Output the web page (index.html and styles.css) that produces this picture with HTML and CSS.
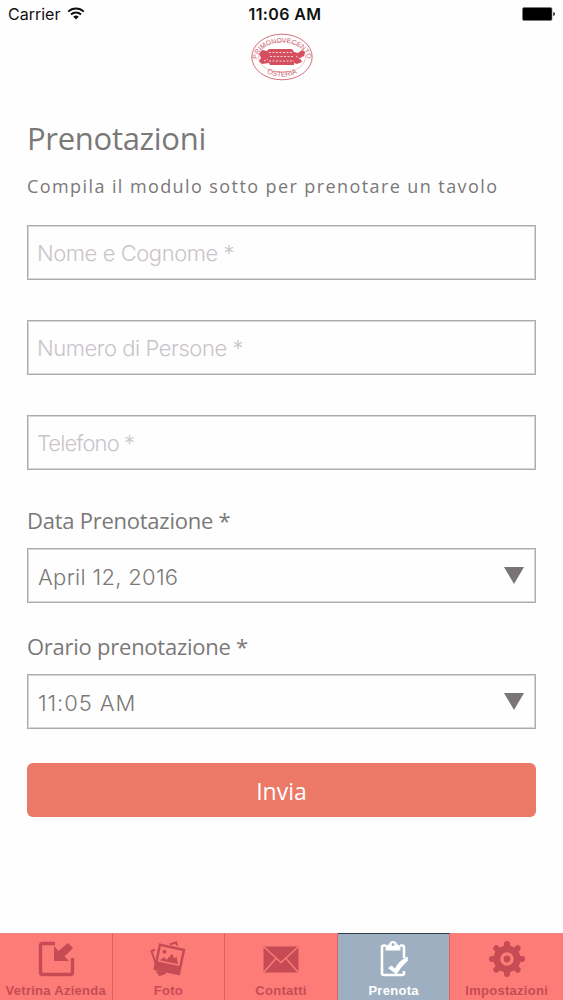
FILE: index.html
```html
<!DOCTYPE html>
<html lang="it">
<head>
  <meta charset="UTF-8">
  <title>Prenotazioni</title>
  <link rel="stylesheet" href="styles.css">
</head>
<body>
  <div class="status-bar">
    <div class="carrier">
      <span>Carrier</span>
      <svg class="wifi" width="18" height="13" viewBox="0 0 18 13">
        <path d="M1.2 4.6a11.2 11.2 0 0 1 15.6 0M4 7.5a7.2 7.2 0 0 1 10 0" fill="none" stroke="#111" stroke-width="2"/>
        <path d="M9 12.6 6.2 9.8a4 4 0 0 1 5.6 0z" fill="#111"/>
      </svg>
    </div>
    <div class="clock">11:06 AM</div>
    <svg class="battery" width="34" height="14" viewBox="0 0 34 14">
      <rect x="0.5" y="0.5" width="29.5" height="13" rx="1.5" fill="#000" stroke="#777" stroke-width="0.6"/>
      <path d="M31.3 5v4q1.7-.5 1.7-2t-1.7-2z" fill="#111"/>
    </svg>
  </div>

  <header class="brand">
    <svg width="62" height="48" viewBox="0 0 62 48">
      <defs>
        <path id="arc-top" d="M6.500 30A25 17 0 1 1 55.500 30"/>
        <path id="arc-bottom" d="M10 36.500Q31 51 52 36.500"/>
      </defs>
      <g fill="none" stroke="#d5707b">
        <ellipse cx="31" cy="24" rx="30.2" ry="22.8" stroke-width="1"/>
        <ellipse cx="31" cy="24" rx="23.5" ry="15.5" stroke-width="0.4"/>
      </g>
      <g class="brand-text" text-anchor="middle">
        <text><textPath href="#arc-top" startOffset="50%">PRIMONOVECENTO</textPath></text>
        <text class="osteria"><textPath href="#arc-bottom" startOffset="50%">OSTERIA</textPath></text>
      </g>
      <!-- the inn: roof, windows, trees -->
      <path d="M8 21l3-4 5 1 2-2h23l2 3 4 1 4-3 3 2-1 4-4 2 2 4-5 2-3-1v2H19l-1-2-7 1-3-3 2-3z" fill="#d64f5f"/>
      <path d="M18 19.500h23M19 23.500h24M18 28h25M13 28l4-2M45 23l4 3" fill="none" stroke="#f8d5d8" stroke-width="1" stroke-dasharray="2 1.500"/>
    </svg>
  </header>

  <main class="booking">
    <h1>Prenotazioni</h1>
    <p class="intro">Compila il modulo sotto per prenotare un tavolo</p>
    <form>
      <input class="field" type="text" placeholder="Nome e Cognome *">
      <input class="field persons" type="text" placeholder="Numero di Persone *">
      <input class="field phone" type="text" placeholder="Telefono *">

      <div class="label">Data Prenotazione *</div>
      <div class="field picker">
        <span class="date">April 12, 2016</span>
        <span class="arrow"></span>
      </div>

      <div class="label">Orario prenotazione *</div>
      <div class="field picker">
        <span class="time">11:05 AM</span>
        <span class="arrow"></span>
      </div>

      <button type="button" class="submit">Invia</button>
    </form>
  </main>

  <nav class="tabs">
    <a class="tab">
      <svg width="38" height="38" viewBox="0 0 38 38">
        <path d="M18 3.500H5.500q-2 0-2 2v27q0 2 2 2h28q2 0 2-2V18" fill="none" stroke="currentColor" stroke-width="3.400"/>
        <path d="M17 6v15h15l-4.500-4.500L36 8 31 3l-9.500 8z" fill="currentColor"/>
      </svg>
      <span>Vetrina Azienda</span>
    </a>
    <a class="tab">
      <svg width="38" height="38" viewBox="0 0 38 38">
        <path d="M6 9.500 2.500 11l6 18M21 4.500l6-2.200 1.300 3.200M8.500 32l2 3 6-2z" fill="none" stroke="currentColor" stroke-width="2"/>
        <g transform="rotate(12 21 19)">
          <path fill-rule="evenodd" d="M7 6h27v27H7zM9.500 8.500v15.500h22v-15.500z" fill="currentColor"/>
          <circle cx="14" cy="13" r="2" fill="currentColor"/>
          <path d="M11 22.500l4-4 3 2 4-7 3 4 2-2 3 7z" fill="currentColor"/>
        </g>
      </svg>
      <span>Foto</span>
    </a>
    <a class="tab">
      <svg width="38" height="38" viewBox="0 0 38 38">
        <path d="M1.500 6.500h35v26h-35z" fill="currentColor"/>
        <path d="M1.500 6.500 19 22.500l17.500-16M1.500 32.500 14 18.500M36.500 32.500 24 18.500" fill="none" stroke="#fa7d78" stroke-width="1.400"/>
      </svg>
      <span>Contatti</span>
    </a>
    <a class="tab active">
      <svg width="38" height="38" viewBox="0 0 38 38">
        <path d="M11 5.500H9q-2 0-2 2V33q0 2 2 2h18q2 0 2-2v-2M25 5.500h2q2 0 2 2V18" fill="none" stroke="currentColor" stroke-width="2.600"/>
        <path fill-rule="evenodd" d="M10.500 10.500V7q0-2 3.500-2.500Q14.500 1 18 1t4 3.500q3.500.5 3.500 2.500v3.500zM18 3a1.500 1.500 0 1 0 0 3 1.500 1.500 0 0 0 0-3z" fill="currentColor"/>
        <path d="M13 28l3.500-2.500 3.500 3q4-8 12.500-12l.5 4q-7 6-11.500 14z" fill="currentColor"/>
      </svg>
      <span>Prenota</span>
    </a>
    <a class="tab">
      <svg width="38" height="38" viewBox="-19 -19 38 38">
        <g fill="none" stroke="currentColor">
          <circle r="10.200" stroke-width="6.800"/>
          <path d="M0-12v-3M0 12v3M-12 0h-3M12 0h3M-8.500-8.500l-2.200-2.200M8.500 8.500l2.200 2.200M-8.500 8.500l-2.200 2.200M8.500-8.500l2.200-2.200" stroke-width="6" stroke-linecap="round"/>
        </g>
        <circle r="3.400" fill="currentColor"/>
      </svg>
      <span>Impostazioni</span>
    </a>
  </nav>
</body>
</html>
```
FILE: styles.css
```css
* {
  box-sizing: border-box;
}
html, body {
  height: 100%;
  margin: 0;
}
body {
  display: flex;
  flex-direction: column;
  background: #fefefe;
  color: #7b7878;
  font-family: "Open Sans", sans-serif;
  overflow: hidden;
}
.status-bar {
  display: grid;
  grid-template-columns: 1fr auto 1fr;
  align-items: center;
  height: 28px;
  padding: 0 7px 0 8px;
  color: #111;
  font: 16px Inter, sans-serif;
}
.carrier {
  display: flex;
  align-items: center;
  gap: 7px;
}
.wifi {
  margin-top: -2px;
}
.clock {
  padding-left: 6px;
  font-weight: 600;
  letter-spacing: 0.4px;
}
.battery {
  justify-self: end;
}
.brand {
  display: flex;
  justify-content: center;
  height: 53px;
  padding-top: 5px;
}
.brand-text {
  fill: #cf6470;
  font: 6.8px "Liberation Sans", sans-serif;
}
.osteria {
  font-size: 7.2px;
}
.booking {
  flex: 1;
  padding: 35px 27px 0;
}
h1 {
  margin: 0;
  font-size: 31px;
  font-weight: 400;
  letter-spacing: -0.3px;
  line-height: 44px;
}
.intro {
  margin: 13px 0 26px;
  font-size: 18px;
  font-weight: 500;
  letter-spacing: 1.41px;
  line-height: 26px;
  white-space: nowrap;
}
.field {
  display: block;
  width: 100%;
  height: 55px;
  margin: 0;
  padding: 0 10px 0 9px;
  border: 1px solid #aeaaad;
  border-radius: 0;
  box-shadow: inset 0 0 0 1px #d9d6d8;
  background: #fefefe;
  color: #7b7878;
  font: 300 22px Inter, sans-serif;
  letter-spacing: -0.45px;
  outline: none;
}
.field::placeholder {
  color: #c9c4ca;
  opacity: 1;
}
.persons, .phone {
  margin-top: 40px;
}
.phone {
  letter-spacing: -0.9px;
}
.label {
  margin: 34px 0 11px;
  font-size: 22px;
  letter-spacing: -0.25px;
  line-height: 33px;
}
.picker + .label {
  margin-top: 27px;
}
.picker {
  display: flex;
  align-items: center;
  justify-content: space-between;
  padding: 2px 11px 0 10px;
}
.date {
  letter-spacing: 0.3px;
}
.time {
  letter-spacing: 0.9px;
}
.arrow {
  margin-top: -2px;
  border: 10px solid transparent;
  border-top: 17px solid #797576;
  border-bottom: 0;
}
.submit {
  display: block;
  width: 100%;
  height: 54px;
  margin-top: 34px;
  padding: 2px 0 0;
  border: 0;
  border-radius: 6px;
  background: #ec7868;
  color: #fff;
  font: 23px "Open Sans", sans-serif;
}
.tabs {
  display: grid;
  grid-template-columns: repeat(5, 1fr);
  height: 67px;
}
.tab {
  display: flex;
  flex-direction: column;
  align-items: center;
  padding-top: 6px;
  border-right: 1px solid #d76462;
  border-top: 1px solid #e98480;
  background: #fd7c77;
  color: #c74b55;
  font: bold 13px/18px "Liberation Sans", sans-serif;
  letter-spacing: 0.28px;
  white-space: nowrap;
}
.tab svg {
  flex: none;
}
.tab span {
  margin-top: 4px;
}
.tab:last-child {
  border-right: 0;
}
.active {
  background: #9dafc0;
  border-top: 1px solid #30404a;
  color: #fff;
}
```
